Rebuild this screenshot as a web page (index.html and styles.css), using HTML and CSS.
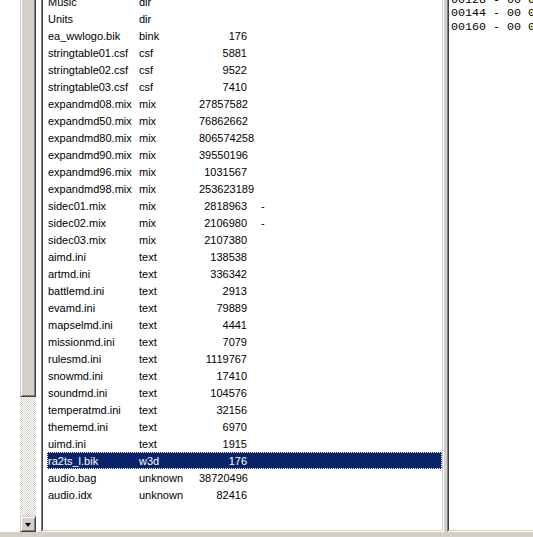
FILE: index.html
```html
<!DOCTYPE html>
<html>
<head>
<meta charset="utf-8">
<link rel="stylesheet" href="styles.css">
</head>
<body>
<div class="app">
  <div class="panes">
    <div class="tree-pane">
      <div class="tree"></div>
      <div class="vscroll">
        <div class="thumb"></div>
        <div class="track"></div>
        <div class="arrow-btn"><span class="tri"></span></div>
      </div>
      <div class="tree-edge"></div>
    </div>
    <div class="list">
      <div class="list-inner">
        <div class="rows">
          <div class="row"><span class="c-name">Music</span><span class="c-type">dir</span><span class="c-size"></span><span class="c-misc"></span></div>
          <div class="row"><span class="c-name">Units</span><span class="c-type">dir</span><span class="c-size"></span><span class="c-misc"></span></div>
          <div class="row"><span class="c-name">ea_wwlogo.bik</span><span class="c-type">bink</span><span class="c-size">176</span><span class="c-misc"></span></div>
          <div class="row"><span class="c-name">stringtable01.csf</span><span class="c-type">csf</span><span class="c-size">5881</span><span class="c-misc"></span></div>
          <div class="row"><span class="c-name">stringtable02.csf</span><span class="c-type">csf</span><span class="c-size">9522</span><span class="c-misc"></span></div>
          <div class="row"><span class="c-name">stringtable03.csf</span><span class="c-type">csf</span><span class="c-size">7410</span><span class="c-misc"></span></div>
          <div class="row"><span class="c-name">expandmd08.mix</span><span class="c-type">mix</span><span class="c-size">27857582</span><span class="c-misc"></span></div>
          <div class="row"><span class="c-name">expandmd50.mix</span><span class="c-type">mix</span><span class="c-size">76862662</span><span class="c-misc"></span></div>
          <div class="row"><span class="c-name">expandmd80.mix</span><span class="c-type">mix</span><span class="c-size">806574258</span><span class="c-misc"></span></div>
          <div class="row"><span class="c-name">expandmd90.mix</span><span class="c-type">mix</span><span class="c-size">39550196</span><span class="c-misc"></span></div>
          <div class="row"><span class="c-name">expandmd96.mix</span><span class="c-type">mix</span><span class="c-size">1031567</span><span class="c-misc"></span></div>
          <div class="row"><span class="c-name">expandmd98.mix</span><span class="c-type">mix</span><span class="c-size">253623189</span><span class="c-misc"></span></div>
          <div class="row"><span class="c-name">sidec01.mix</span><span class="c-type">mix</span><span class="c-size">2818963</span><span class="c-misc">-</span></div>
          <div class="row"><span class="c-name">sidec02.mix</span><span class="c-type">mix</span><span class="c-size">2106980</span><span class="c-misc">-</span></div>
          <div class="row"><span class="c-name">sidec03.mix</span><span class="c-type">mix</span><span class="c-size">2107380</span><span class="c-misc"></span></div>
          <div class="row"><span class="c-name">aimd.ini</span><span class="c-type">text</span><span class="c-size">138538</span><span class="c-misc"></span></div>
          <div class="row"><span class="c-name">artmd.ini</span><span class="c-type">text</span><span class="c-size">336342</span><span class="c-misc"></span></div>
          <div class="row"><span class="c-name">battlemd.ini</span><span class="c-type">text</span><span class="c-size">2913</span><span class="c-misc"></span></div>
          <div class="row"><span class="c-name">evamd.ini</span><span class="c-type">text</span><span class="c-size">79889</span><span class="c-misc"></span></div>
          <div class="row"><span class="c-name">mapselmd.ini</span><span class="c-type">text</span><span class="c-size">4441</span><span class="c-misc"></span></div>
          <div class="row"><span class="c-name">missionmd.ini</span><span class="c-type">text</span><span class="c-size">7079</span><span class="c-misc"></span></div>
          <div class="row"><span class="c-name">rulesmd.ini</span><span class="c-type">text</span><span class="c-size">1119767</span><span class="c-misc"></span></div>
          <div class="row"><span class="c-name">snowmd.ini</span><span class="c-type">text</span><span class="c-size">17410</span><span class="c-misc"></span></div>
          <div class="row"><span class="c-name">soundmd.ini</span><span class="c-type">text</span><span class="c-size">104576</span><span class="c-misc"></span></div>
          <div class="row"><span class="c-name">temperatmd.ini</span><span class="c-type">text</span><span class="c-size">32156</span><span class="c-misc"></span></div>
          <div class="row"><span class="c-name">thememd.ini</span><span class="c-type">text</span><span class="c-size">6970</span><span class="c-misc"></span></div>
          <div class="row"><span class="c-name">uimd.ini</span><span class="c-type">text</span><span class="c-size">1915</span><span class="c-misc"></span></div>
          <div class="row selected"><span class="c-name">ra2ts_l.bik</span><span class="c-type">w3d</span><span class="c-size">176</span><span class="c-misc"></span></div>
          <div class="row"><span class="c-name">audio.bag</span><span class="c-type">unknown</span><span class="c-size">38720496</span><span class="c-misc"></span></div>
          <div class="row"><span class="c-name">audio.idx</span><span class="c-type">unknown</span><span class="c-size">82416</span><span class="c-misc"></span></div>
        </div>
      </div>
    </div>
    <div class="splitter"></div>
    <div class="hex">
      <div class="hex-inner">
        <div class="hex-lines">
          <div class="hex-line">00128 - 00 00 00 00 00 00 00 00</div>
          <div class="hex-line">00144 - 00 00 00 00 00 00 00 00</div>
          <div class="hex-line">00160 - 00 00 00 00 00 00 00 00</div>
        </div>
      </div>
    </div>
  </div>
  <div class="footer"></div>
</div>
</body>
</html>
```

FILE: styles.css
```css
* { box-sizing: border-box; }
html, body { margin: 0; padding: 0; }
body {
  width: 533px;
  height: 537px;
  overflow: hidden;
  background: #d4d0c8;
  font-family: "Liberation Sans", Arial, sans-serif;
  font-size: 11px;
  color: #000;
}
.app {
  display: flex;
  flex-direction: column;
  width: 533px;
  height: 537px;
}
.panes {
  display: flex;
  height: 532px;
  flex: 0 0 532px;
}
.footer {
  flex: 1;
  background: #d4d0c8;
}

/* left tree pane with scrollbar */
.tree-pane {
  display: flex;
  width: 41px;
  flex: 0 0 41px;
  background: #fff;
}
.tree { width: 20px; background: #fff; }
.vscroll {
  width: 16px;
  display: flex;
  flex-direction: column;
}
.thumb {
  height: 397px;
  background: #d4d0c8;
  border-right: 1px solid #404040;
  border-bottom: 1px solid #404040;
  box-shadow: inset 1px 0 #fff, inset -1px -1px #808080;
  border-left: 1px solid #d4d0c8;
}
.track {
  flex: 1;
  background-color: #fff;
  background-image: repeating-conic-gradient(#d4d0c8 0 25%, #fff 0 50%);
  background-size: 2px 2px;
}
.arrow-btn {
  height: 16px;
  background: #d4d0c8;
  border: 1px solid;
  border-color: #d4d0c8 #404040 #404040 #d4d0c8;
  box-shadow: inset 1px 1px #fff, inset -1px -1px #808080;
  display: flex;
  align-items: center;
  justify-content: center;
}
.tri {
  width: 0;
  height: 0;
  border-left: 3.5px solid transparent;
  border-right: 3.5px solid transparent;
  border-top: 4px solid #000;
  margin-top: 1px;
}
.tree-edge { width: 5px; background: #fff; }

/* file list */
.list {
  width: 403px;
  flex: 0 0 403px;
  border-left: 1px solid #808080;
  border-right: 1px solid #fff;
  border-bottom: 1px solid #fff;
}
.list-inner {
  height: 100%;
  background: #fff;
  border-left: 1px solid #404040;
  border-right: 1px solid #d4d0c8;
  border-bottom: 1px solid #d4d0c8;
  overflow: hidden;
}
.rows {
  margin-top: -7px;
}
.row {
  display: grid;
  grid-template-columns: 91px 60px 48px 1fr;
  height: 17px;
  line-height: 17px;
  margin-left: 4px;
  padding-left: 1px;
  padding-top: 1px;
  white-space: nowrap;
}
.c-size { text-align: right; }
.c-misc { padding-left: 14px; }
.row.selected {
  background: #0a246a;
  color: #fff;
  outline: 1px dotted #fff;
  outline-offset: -1px;
}

.splitter {
  width: 3px;
  flex: 0 0 3px;
  background: #d4d0c8;
}

/* hex pane */
.hex {
  flex: 1;
  min-width: 0;
  border-left: 1px solid #808080;
  border-bottom: 1px solid #fff;
}
.hex-inner {
  height: 100%;
  background: #fff;
  border-left: 1px solid #404040;
  border-bottom: 1px solid #d4d0c8;
  overflow: hidden;
}
.hex-lines {
  margin-top: -6px;
  padding-left: 2px;
  font-family: "Liberation Mono", "Courier New", monospace;
  font-size: 11.67px;
  line-height: 13.33px;
  white-space: nowrap;
}
```
